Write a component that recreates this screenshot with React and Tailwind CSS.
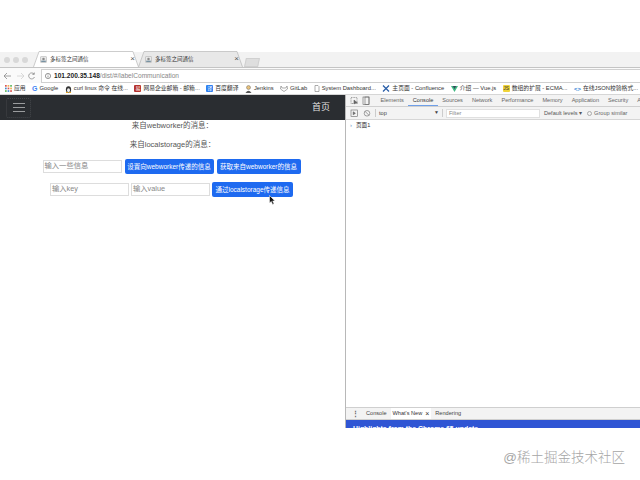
import React from "react";

const FONT = "[font-family:'Liberation_Sans','Noto_Sans_CJK_SC',sans-serif]";

function TabShape({ fill }) {
  return (
    <svg className="absolute inset-0 w-full h-full" viewBox="0 0 105 16" preserveAspectRatio="none">
      <path d="M0.5 16 L6 0.5 H99 L104.5 16" fill={fill} stroke="#b8b8b8" strokeWidth="0.7" />
    </svg>
  );
}

function Favicon() {
  return (
    <svg width="7" height="7" viewBox="0 0 9 9" className="shrink-0">
      <rect x="0.5" y="0.5" width="8" height="8" rx="1.5" fill="#e8e8e8" stroke="#999" strokeWidth="0.6" />
      <circle cx="4.5" cy="4" r="1.6" fill="#8a8a8a" />
      <rect x="1.5" y="6" width="6" height="1.6" fill="#6d8a9c" />
    </svg>
  );
}

function Tab({ active, width }) {
  return (
    <div className={`relative h-4 flex items-center pl-[7px] pr-[4px] ${width}`}>
      <TabShape fill={active ? "#ffffff" : "#e8e8e8"} />
      <div className="relative flex items-center gap-[3px] w-full">
        <Favicon />
        <span className="text-[5.5px] text-[#333] whitespace-nowrap">多标签之间通信</span>
        <span className="ml-auto text-[8px] leading-none text-[#555]">×</span>
      </div>
    </div>
  );
}

function Book({ icon, label }) {
  return (
    <div className="flex items-center gap-[2px] shrink-0">
      {icon}
      <span className="text-[5.8px] text-[#333] whitespace-nowrap">{label}</span>
    </div>
  );
}

const Sq = ({ c, t = "" }) => (
  <span className={`w-[7px] h-[7px] rounded-[1px] flex items-center justify-center text-[5px] leading-none text-white ${c}`}>{t}</span>
);

function DevTab({ label, active }) {
  return (
    <div className={`h-full flex items-center px-[4.5px] text-[5.6px] whitespace-nowrap ${active ? "text-[#333] border-b border-[#6f9fe8]" : "text-[#666]"}`}>
      {label}
    </div>
  );
}

function Field({ placeholder, w }) {
  return (
    <div className={`h-[13px] border border-[#ddd] bg-white flex items-center px-px text-[7.3px] text-[#888] whitespace-nowrap ${w}`}>
      {placeholder}
    </div>
  );
}

function Btn({ label, w, h = "h-[15px]" }) {
  return (
    <div className={`${h} ${w} bg-[#1e6af0] rounded-[2px] text-white text-[6.5px] flex items-center justify-center whitespace-nowrap`}>
      {label}
    </div>
  );
}

export default function App() {
  return (
    <div className={`w-[640px] h-[480px] bg-white overflow-hidden flex flex-col ${FONT}`}>
      <div className="h-[52px] shrink-0" />
      {/* tab strip */}
      <div className="h-4 shrink-0 bg-[#f2f2f2] flex items-end pl-[4px] border-b border-[#c4c4c4]">
        <div className="flex items-center gap-[3px] w-[29px] h-full">
          <span className="w-[6px] h-[6px] rounded-full bg-[#d8d8d8]" />
          <span className="w-[6px] h-[6px] rounded-full bg-[#d8d8d8]" />
          <span className="w-[6px] h-[6px] rounded-full bg-[#d8d8d8]" />
        </div>
        <Tab active width="w-[106px]" />
        <Tab width="w-[105px] -ml-px" />
        <div className="ml-[2px] w-[14px] h-[9px] bg-[#dedede] -skew-x-12 border border-[#d0d0d0]" />
      </div>
      {/* address bar */}
      <div className="h-[15px] shrink-0 flex items-center pl-[3px] bg-[#fafafa]">
        <svg width="34" height="10" viewBox="0 0 34 10" className="shrink-0" fill="none" stroke="#8a8a8a" strokeWidth="0.8">
          <path d="M1 5 H8 M1 5 L4 2 M1 5 L4 8" />
          <path d="M14 5 H21 M21 5 L18 2 M21 5 L18 8" stroke="#d0d0d0" />
          <path d="M32 3 A3 3 0 1 0 32.5 6 M32.3 1.5 V3.4 H30.4" transform="translate(-1 0)" />
        </svg>
        <div className="ml-[4px] h-[14px] flex-1 bg-white border border-[#d0d0d0] border-r-0 flex items-center pl-[3px] text-[6.6px] gap-[3px]">
          <svg width="6" height="6" viewBox="0 0 6 6" fill="none" stroke="#555" strokeWidth="0.6"><circle cx="3" cy="3" r="2.6" /><path d="M3 2.5 V4.5 M3 1.3 V1.9" /></svg>
          <span className="whitespace-nowrap"><span className="text-[#222] font-bold">101.200.35.148</span><span className="text-[#888]">/dist/#/labelCommunication</span></span>
        </div>
      </div>
      {/* bookmarks */}
      <div className="h-3 shrink-0 bg-white border-b border-[#d6d6d6] flex items-center pl-[5px] gap-[6.5px] overflow-hidden">
        <Book icon={<svg width="7" height="7" viewBox="0 0 7 7"><rect width="1.7" height="1.7" fill="#d9534f"/><rect x="2.6" width="1.7" height="1.7" fill="#f0ad4e"/><rect x="5.2" width="1.7" height="1.7" fill="#5cb85c"/><rect y="2.6" width="1.7" height="1.7" fill="#428bca"/><rect x="2.6" y="2.6" width="1.7" height="1.7" fill="#d9534f"/><rect x="5.2" y="2.6" width="1.7" height="1.7" fill="#f0ad4e"/><rect y="5.2" width="1.7" height="1.7" fill="#5cb85c"/><rect x="2.6" y="5.2" width="1.7" height="1.7" fill="#428bca"/><rect x="5.2" y="5.2" width="1.7" height="1.7" fill="#d9534f"/></svg>} label="应用" />
        <Book icon={<span className="text-[7px] font-bold text-[#4285f4] leading-none">G</span>} label="Google" />
        <Book icon={<svg width="7" height="8" viewBox="0 0 7 8"><ellipse cx="3.5" cy="4.5" rx="2.6" ry="3.2" fill="#333"/><ellipse cx="3.5" cy="5.2" rx="1.5" ry="2" fill="#eee"/><path d="M1 7.5 H3 M4 7.5 H6" stroke="#e8a820" strokeWidth="1"/></svg>} label="curl linux 命令 在线..." />
        <Book icon={<Sq c="bg-[#b5322d]" t="易" />} label="网易企业邮箱 - 邮箱..." />
        <Book icon={<Sq c="bg-[#2d7ff0]" t="译" />} label="百度翻译" />
        <Book icon={<svg width="7" height="8" viewBox="0 0 7 8"><circle cx="3.5" cy="2.5" r="2" fill="#e5c07b" stroke="#555" strokeWidth="0.4"/><path d="M0.5 8 Q3.5 3.5 6.5 8Z" fill="#555"/></svg>} label="Jenkins" />
        <Book icon={<svg width="8" height="7" viewBox="0 0 8 7" fill="none" stroke="#888" strokeWidth="0.7"><path d="M1 1 L2.2 3 H5.8 L7 1 L7.5 4 L4 6.5 L0.5 4Z"/></svg>} label="GitLab" />
        <Book icon={<svg width="6" height="7" viewBox="0 0 6 7" fill="none" stroke="#777" strokeWidth="0.6"><path d="M1 0.5 H4 L5 1.5 V6.5 H1Z"/></svg>} label="System Dashboard..." />
        <Book icon={<svg width="8" height="7" viewBox="0 0 8 7" stroke="#2b5fa8" strokeWidth="1.3"><path d="M1 0.5 L7 6.5 M7 0.5 L1 6.5"/></svg>} label="主页面 - Confluence" />
        <Book icon={<svg width="7" height="6" viewBox="0 0 7 6"><path d="M0 0 H7 L3.5 6Z" fill="#41b883"/><path d="M1.8 0 H5.2 L3.5 3Z" fill="#35495e"/></svg>} label="介绍 — Vue.js" />
        <Book icon={<Sq c="bg-[#f0d43a] !text-[#333]" t="JS" />} label="数组的扩展 - ECMA..." />
        <Book icon={<span className="text-[6px] font-bold text-[#2f7fd6] leading-none">{"<>"}</span>} label="在线JSON校验格式..." />
      </div>
      {/* main split */}
      <div className="h-[333px] shrink-0 flex">
        {/* page */}
        <div className="w-[345px] shrink-0 flex flex-col">
          <div className="h-[25px] shrink-0 bg-[#2a2d31] flex items-center justify-between pl-[6px] pr-[15px]">
            <div className="w-[25px] h-[20px] border border-dotted border-[#44474b] rounded-[2px] flex flex-col items-center justify-center gap-[3px]">
              <span className="w-[12px] h-px bg-[#9a9c9e]" />
              <span className="w-[12px] h-px bg-[#9a9c9e]" />
              <span className="w-[12px] h-px bg-[#9a9c9e]" />
            </div>
            <span className="text-[9px] text-[#e0e0e0]">首页</span>
          </div>
          <div className="relative flex-1 flex flex-col items-center text-[#555]">
            <p className="h-[12px] leading-[12px] text-[7.5px]">来自webworker的消息：</p>
            <p className="mt-[7px] h-[12px] leading-[12px] text-[7.5px]">来自localstorage的消息：</p>
            <div className="mt-[8px] flex items-center gap-[3px] ml-[-2px]">
              <Field placeholder="输入一些信息" w="w-[79px]" />
              <Btn label="设置向webworker传递的信息" w="w-[89px]" />
              <Btn label="获取来自webworker的信息" w="w-[84px]" />
            </div>
            <div className="mt-[8px] flex items-center ml-[-2px]">
              <Field placeholder="输入key" w="w-[79px]" />
              <div className="w-[2px]" />
              <Field placeholder="输入value" w="w-[79px]" />
              <div className="w-[2px]" />
              <Btn label="通过localstorage传递信息" w="w-[81px]" />
            </div>
            <svg className="absolute left-[269px] top-[75px]" width="7" height="10" viewBox="0 0 7 10">
              <path d="M0.5 0.5 V8 L2.3 6.4 L3.6 9.4 L5 8.8 L3.7 5.9 H6Z" fill="#111" stroke="#fff" strokeWidth="0.5" />
            </svg>
          </div>
        </div>
        {/* devtools */}
        <div className="flex-1 border-l border-[#b8b8b8] flex flex-col min-w-0">
          <div className="h-3 shrink-0 bg-[#f3f3f3] border-b border-[#d0d0d0] flex items-center pl-[4px] overflow-hidden">
            <svg width="24" height="9" viewBox="0 0 24 9" className="shrink-0" fill="none" stroke="#666" strokeWidth="0.6">
              <rect x="1" y="1.5" width="6" height="6" strokeDasharray="1 0.6" />
              <path d="M4 4 L7.5 7 L5.5 7 L4 8Z" fill="#666" />
              <rect x="13" y="1" width="6" height="7.5" />
              <rect x="15" y="1" width="4" height="7.5" />
            </svg>
            <span className="w-px h-2 bg-[#ccc] mr-[2px]" />
            <DevTab label="Elements" />
            <DevTab label="Console" active />
            <DevTab label="Sources" />
            <DevTab label="Network" />
            <DevTab label="Performance" />
            <DevTab label="Memory" />
            <DevTab label="Application" />
            <DevTab label="Security" />
            <DevTab label="Audits" />
          </div>
          <div className="h-[13px] shrink-0 bg-[#f3f3f3] border-b border-[#d6d6d6] flex items-center pl-[4px] overflow-hidden">
            <svg width="22" height="9" viewBox="0 0 22 9" className="shrink-0" fill="none" stroke="#666" strokeWidth="0.6">
              <rect x="1" y="1" width="6.5" height="6.5" />
              <path d="M3.2 2.8 L5.4 4.3 L3.2 5.8Z" fill="#666" />
              <circle cx="17" cy="4.3" r="2.8" />
              <path d="M15 2.3 L19 6.3" />
            </svg>
            <span className="w-px h-2 bg-[#ccc] mx-[3px]" />
            <span className="text-[5.6px] text-[#444] w-[55px]">top</span>
            <span className="text-[5px] text-[#444]">▼</span>
            <span className="w-px h-2 bg-[#ccc] mx-[3px]" />
            <div className="w-[94px] h-[9px] bg-white border border-[#e0e0e0] flex items-center pl-[2px] text-[5.6px] text-[#888]">Filter</div>
            <span className="ml-[4px] text-[5.6px] text-[#555] whitespace-nowrap">Default levels ▾</span>
            <span className="ml-[5px] w-[5px] h-[5px] rounded-full border border-[#aaa]" />
            <span className="ml-[2px] text-[5.6px] text-[#666] whitespace-nowrap">Group similar</span>
          </div>
          <div className="flex-1 flex items-start pl-[4px] gap-[4px] text-[#333]">
            <span className="text-[6px] leading-[10px] text-[#6a8fc0]">›</span>
            <span className="text-[5.6px] leading-[10px]">页面1</span>
          </div>
          <div className="h-[13px] shrink-0 bg-[#f3f3f3] border-y border-[#cfcfcf] flex items-center pl-[6px] text-[5.6px] text-[#444]">
            <span className="text-[7px] leading-none text-[#666] font-bold">⋮</span>
            <span className="ml-[7px]">Console</span>
            <span className="ml-[4px] bg-white h-full flex items-center px-[2px] text-[#333]">What's New <span className="ml-[3px] text-[7px] leading-none">×</span></span>
            <span className="ml-[4px]">Rendering</span>
          </div>
          <div className="h-[8px] shrink-0 bg-[#2f55d4] overflow-hidden pl-[7px] text-[6.9px] font-bold leading-[17px] text-white whitespace-nowrap">
            Highlights from the Chrome 65 update
          </div>
        </div>
      </div>
      {/* watermark */}
      <div className="flex-1 flex justify-end pr-[15px] pt-[21px]">
        <span className="text-[13.5px] leading-[18px] text-[#a6a6a6] font-light">@稀土掘金技术社区</span>
      </div>
    </div>
  );
}
